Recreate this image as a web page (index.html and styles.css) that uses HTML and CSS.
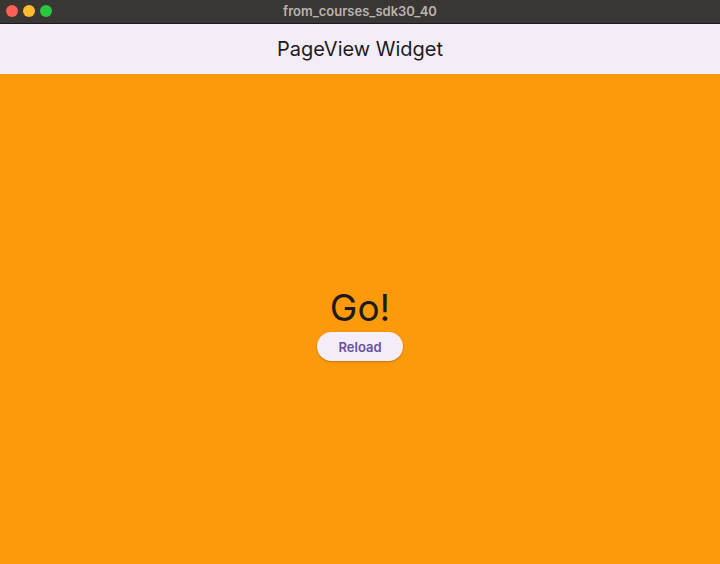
FILE: index.html
```html
<!DOCTYPE html>
<html>
<head>
<meta charset="utf-8">
<link rel="stylesheet" href="styles.css">
</head>
<body>
<div class="window">
  <div class="titlebar">
    <div class="lights">
      <span class="light red"></span>
      <span class="light yellow"></span>
      <span class="light green"></span>
    </div>
    <div class="wintitle">from_courses_sdk30_40</div>
  </div>
  <div class="appbar">PageView Widget</div>
  <div class="page">
    <div class="go">Go!</div>
    <button class="reload">Reload</button>
  </div>
</div>
</body>
</html>
```
FILE: styles.css
```css
html, body {
  margin: 0;
  padding: 0;
  width: 720px;
  height: 564px;
  overflow: hidden;
}
.window {
  display: flex;
  flex-direction: column;
  height: 564px;
  font-family: Inter, "Noto Sans", sans-serif;
}
.titlebar {
  position: relative;
  height: 23px;
  background: #3a3634;
  border-bottom: 1px solid #1e1c1b;
  display: flex;
  align-items: center;
  justify-content: center;
}
.lights {
  position: absolute;
  left: 6px;
  top: 5px;
  display: flex;
  gap: 5px;
}
.light {
  width: 12px;
  height: 12px;
  border-radius: 50%;
}
.red { background: #fe5f57; }
.yellow { background: #febc2e; }
.green { background: #28c840; }
.wintitle {
  color: #b8b4b1;
  font-size: 13px;
  font-weight: 600;
  margin-top: -2px;
}
.appbar {
  height: 50px;
  background: #f4edf8;
  display: flex;
  align-items: center;
  justify-content: center;
  font-size: 20px;
  color: #1d1b20;
  font-family: Inter, "Noto Sans", sans-serif;
}
.page {
  flex: 1;
  background: #fd9a0c;
  display: flex;
  flex-direction: column;
  align-items: center;
  justify-content: center;
  padding-top: 11px;
}
.go {
  font-family: Inter, "Noto Sans", sans-serif;
  font-size: 37px;
  color: #1d1b20;
  line-height: 40px;
}
.reload {
  margin-top: 4px;
  width: 86px;
  height: 29px;
  border: none;
  border-radius: 15px;
  background: #f4edf8;
  color: #6750a4;
  font-family: Inter, "Noto Sans", sans-serif;
  font-weight: 600;
  font-size: 13px;
  box-shadow: 0 1px 2px rgba(0,0,0,0.25);
  padding: 0;
}
```
